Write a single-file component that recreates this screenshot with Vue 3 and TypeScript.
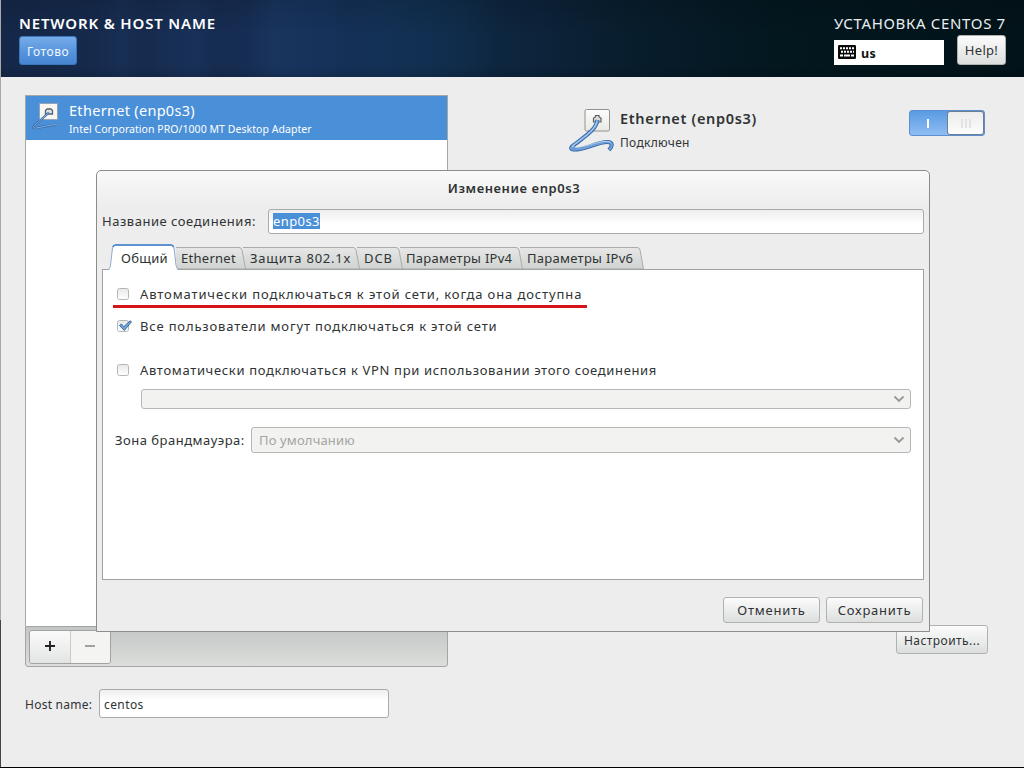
<script setup lang="ts">
import { ref } from 'vue'

interface Tab {
  id: string
  label: string
  width: number
}

const tabs: Tab[] = [
  { id: 'general', label: 'Общий', width: 66 },
  { id: 'ethernet', label: 'Ethernet', width: 67 },
  { id: 'security', label: 'Защита 802.1x', width: 114 },
  { id: 'dcb', label: 'DCB', width: 43 },
  { id: 'ipv4', label: 'Параметры IPv4', width: 120 },
  { id: 'ipv6', label: 'Параметры IPv6', width: 121 },
]
const activeTab = ref('general')

const connectionName = ref('enp0s3')
const hostName = ref('centos')
const device = 'Ethernet (enp0s3)'
const autoConnect = ref(false)
const allUsers = ref(true)
const autoVpn = ref(false)
</script>

<template>
  <div class="screen">
    <header class="top">
      <div class="top-left">
        <h1>NETWORK &amp; HOST NAME</h1>
        <button class="btn done"><span>Готово</span></button>
      </div>
      <div class="top-right">
        <div class="product"><span>УСТАНОВКА CENTOS 7</span></div>
        <div class="top-row">
          <div class="layout-box">
            <svg class="kbd" viewBox="0 0 18 14">
              <rect width="18" height="14" rx="1.2" fill="#0a0a0a" />
              <path
                d="M2 3.300h2m1 0h2m1 0h2m1 0h2m1 0h2M3 6.800h2m1 0h2m1 0h2m1 0h2m1 0h1M2 10.500h3m1 0h6m1 0h3"
                stroke="#fff"
                stroke-width="2"
                fill="none"
              />
            </svg>
            <b>us</b>
          </div>
          <button class="btn help"><span>Help!</span></button>
        </div>
      </div>
    </header>

    <main class="body">
      <div class="columns">
        <section class="devices">
          <div class="list">
            <div class="device">
              <svg class="dev-icon" viewBox="0 0 30 30">
                <rect x="8.500" y="2.500" width="18" height="16" fill="#f8f6ef" stroke="#8fa3ba" />
                <path d="M14.500 13V9.500l1.500-1.500h4l1.500 1.500V13z" fill="#dfe3e6" stroke="#4f6378" stroke-width="1.300" />
                <path d="M18 11.500L3.500 24.500c-2 2-1 3 2 2.500 7-1 14-4 22.500-3" fill="none" stroke="#2f64a0" stroke-width="2.200" />
                <path d="M18 11.500L3.500 24.500c-2 2-1 3 2 2.500 7-1 14-4 22.500-3" fill="none" stroke="#8cb8e6" stroke-width="1" />
              </svg>
              <div>
                <div class="dev-name"><span>{{ device }}</span></div>
                <div class="dev-desc"><span>Intel Corporation PRO/1000 MT Desktop Adapter</span></div>
              </div>
            </div>
          </div>
          <div class="list-tools">
            <div class="tool-group">
              <button class="tool">
                <svg viewBox="0 0 12 12"><path d="M6 1v10M1 6h10" stroke="#222" stroke-width="1.900" /></svg>
              </button>
              <button class="tool off">
                <svg viewBox="0 0 12 12"><path d="M1 6h10" stroke="#9fa19f" stroke-width="1.800" /></svg>
              </button>
            </div>
          </div>
        </section>

        <section class="details">
          <div class="status">
            <svg class="net-icon" viewBox="0 0 48 46">
              <defs>
                <linearGradient id="plate" x2="0" y2="1">
                  <stop offset="0" stop-color="#fdfdfc" />
                  <stop offset="1" stop-color="#e8e8e4" />
                </linearGradient>
              </defs>
              <rect x="17" y="1.500" width="24.500" height="21.500" rx="1.500" fill="url(#plate)" stroke="#92938e" />
              <path d="M25.500 14v-4l2-1V7.500h3.500V9l2 1v4z" fill="#dcdcd8" stroke="#5c6068" stroke-width="1.200" />
              <path
                d="M29.500 12C28 23 14 30 4 38.500c-3 3 2 3.500 8 2.500 9-1.500 19-7 27-7 7 0 5 4.500 2 8"
                fill="none"
                stroke="#2e5f9f"
                stroke-width="4"
              />
              <path
                d="M29.500 12C28 23 14 30 4 38.500c-3 3 2 3.500 8 2.500 9-1.500 19-7 27-7 7 0 5 4.500 2 8"
                fill="none"
                stroke="#6f9fd8"
                stroke-width="2.400"
              />
              <path
                d="M29 13C27 23.500 13 30.500 4 38.500c5 2 10 .5 16-1.200 8-2.300 18-5.800 22.500-2.800"
                fill="none"
                stroke="#c3dbf3"
                stroke-width=".9"
              />
            </svg>
            <div class="status-text">
              <div class="status-name"><span>{{ device }}</span></div>
              <div class="status-state"><span>Подключен</span></div>
            </div>
            <div class="switch">
              <div class="on"><i></i></div>
              <div class="knob"><i></i><i></i><i></i></div>
            </div>
          </div>
          <button class="btn configure"><span>Настроить...</span></button>
        </section>
      </div>

      <div class="host">
        <label for="host"><span>Host name:</span></label>
        <input id="host" v-model="hostName" spellcheck="false" />
      </div>
    </main>

    <div class="dialog">
      <div class="title"><span>Изменение enp0s3</span></div>
      <div class="name-row">
        <label class="name-label"><span>Название соединения:</span></label>
        <div class="entry"><span class="sel">{{ connectionName }}</span></div>
      </div>

      <div class="tabs">
        <div
          v-for="(tab, i) in tabs"
          :key="tab.id"
          :class="['tab', tab.id, { active: tab.id === activeTab }]"
          :style="{ width: tab.width + 'px', zIndex: tabs.length - i }"
          @click="activeTab = tab.id"
        >
          <svg v-if="tab.id === activeTab" class="shape" :width="tab.width + 4" height="26">
            <path :d="`M-1 26L2.500 3Q3 1 5 1H${tab.width - 5}Q${tab.width - 2.500} 1 ${tab.width - 2} 3L${tab.width + 1.500} 26z`" fill="#fff" />
            <path :d="`M-1 25.500Q0 24 .5 21L2.500 4Q3 1 5.500 1H${tab.width - 5}Q${tab.width - 2.500} 1 ${tab.width - 2} 4L${tab.width} 21Q${tab.width + .5} 24 ${tab.width + 2} 25.500`" fill="none" stroke="#8fa9c8" />
            <path :d="`M3 3Q3.500 1 5.500 1H${tab.width - 5}Q${tab.width - 3} 1 ${tab.width - 2.500} 3`" fill="none" stroke="#3f7fcb" stroke-width="1.600" />
          </svg>
          <svg v-else class="shape" :width="tab.width + 4" height="22">
            <defs>
              <linearGradient :id="'g-' + tab.id" x2="0" y2="1">
                <stop offset="0" stop-color="#e6e7e6" />
                <stop offset="1" stop-color="#d0d3d1" />
              </linearGradient>
            </defs>
            <path :d="`M-6 .5H${tab.width - 4}Q${tab.width - 1.500} .5 ${tab.width - 1} 3L${tab.width + 2.500} 22H-6z`" :fill="`url(#g-${tab.id})`" stroke="#a9aca9" />
          </svg>
          <span>{{ tab.label }}</span>
        </div>
      </div>

      <div class="page">
        <div class="check auto-line">
          <i :class="['box', { on: autoConnect }]"></i>
          <span class="t-auto">Автоматически подключаться к этой сети, когда она доступна</span>
        </div>
        <div class="underline"></div>
        <div class="check users-line">
          <i :class="['box', { on: allUsers }]">
            <svg v-if="allUsers" viewBox="0 0 16 14">
              <path d="M2.500 6.500L4.500 5l2.300 2.800L13 1.800l1.500 1L7.300 11.500z" fill="#74a6de" stroke="#2f5f98" stroke-width=".9" />
            </svg>
          </i>
          <span class="t-users">Все пользователи могут подключаться к этой сети</span>
        </div>
        <div class="check vpn-line">
          <i :class="['box', { on: autoVpn }]"></i>
          <span class="t-vpn">Автоматически подключаться к VPN при использовании этого соединения</span>
        </div>
        <div class="combo vpn-combo">
          <svg viewBox="0 0 12 8"><path d="M1.500 1.500L6 6l4.500-4.500" fill="none" stroke="#979a97" stroke-width="1.900" /></svg>
        </div>
        <div class="zone">
          <label><span>Зона брандмауэра:</span></label>
          <div class="combo zone-combo">
            <span>По умолчанию</span>
            <svg viewBox="0 0 12 8"><path d="M1.500 1.500L6 6l4.500-4.500" fill="none" stroke="#979a97" stroke-width="1.900" /></svg>
          </div>
        </div>
      </div>

      <div class="actions">
        <button class="btn cancel"><span>Отменить</span></button>
        <button class="btn save"><span>Сохранить</span></button>
      </div>
    </div>
  </div>
</template>

<style>
body {
  margin: 0;
  overflow: hidden;
}
</style>

<style scoped>
* {
  box-sizing: border-box;
}
.screen {
  position: relative;
  width: 1024px;
  height: 768px;
  overflow: hidden;
  background: #ededed;
  border-bottom: 1px solid #000;
  color: #2f3334;
  font: 13px/18px 'Noto Sans', 'Open Sans', sans-serif;
  white-space: nowrap;
}
.screen::before {
  content: '';
  position: absolute;
  left: 0;
  top: 0;
  width: 1px;
  height: 768px;
  z-index: 3;
  background: linear-gradient(#a9a9a9 620px, #444 620px);
}
button,
input {
  font: inherit;
  color: inherit;
  margin: 0;
}
.btn {
  display: flex;
  align-items: center;
  justify-content: center;
  padding: 0;
  border: 1px solid #b0b2b0;
  border-radius: 3px;
  background: linear-gradient(#fbfbfb, #e9eaea 60%, #dcdedd);
}

/* header */
.top {
  display: flex;
  justify-content: space-between;
  height: 77px;
  padding: 14px 18px 0 19px;
  background:
    linear-gradient(rgba(0, 0, 0, 0.12), transparent 45%, transparent 85%, rgba(0, 0, 0, 0.12)),
    linear-gradient(90deg, transparent 9%, rgba(60, 110, 180, 0.06) 12%, transparent 14%, rgba(60, 110, 180, 0.08) 19%, transparent 21%, transparent 24%, rgba(60, 110, 180, 0.08) 27%, transparent 31%, rgba(0, 0, 0, 0.05) 34%, transparent 37%, transparent 45%, rgba(0, 0, 0, 0.06) 49%, transparent 53%),
    linear-gradient(90deg, #152849 0, #162c51 22%, #16335c 32%, #112f50 42%, #0c2238 54%, #081d2c 62%, #03171f 76%, #021319 100%);
  color: #fff;
}
h1 {
  margin: 0 0 4px;
  font-size: 15px;
  line-height: 18px;
  font-weight: 600;
  letter-spacing: 0.83px;
}
.done {
  width: 58px;
  height: 29px;
  padding-top: 2px;
  border-color: #3a76bd;
  background: linear-gradient(#76ace9, #5592dc 60%, #4585d2);
  color: #f2f8ff;
  font-size: 12px;
  letter-spacing: 0.5px;
}
.top-right {
  width: 172px;
}
.product {
  height: 18px;
  font-size: 15px;
  letter-spacing: 0.66px;
  color: #e8eef0;
}
.top-row {
  display: flex;
  justify-content: space-between;
  padding-top: 3px;
}
.layout-box {
  display: flex;
  align-items: center;
  width: 110px;
  height: 25px;
  margin-top: 5px;
  padding-left: 4px;
  background: #fff;
  color: #111;
}
.layout-box b {
  padding: 2px 0 0 5px;
  font-size: 12.5px;
  letter-spacing: 0.4px;
}
.kbd {
  width: 18px;
  height: 14px;
  margin-top: -2px;
}
.help {
  width: 49px;
  height: 30px;
  color: #2f3334;
  letter-spacing: 0.3px;
}

/* body */
.body {
  padding: 18px 36px 0 25px;
}
.columns {
  display: flex;
  justify-content: space-between;
}
.devices {
  width: 423px;
  height: 572px;
  display: flex;
  flex-direction: column;
}
.list {
  flex: 1;
  border: 1px solid #a5a7a5;
  border-bottom: 0;
  background: #fff;
}
.device {
  display: flex;
  gap: 8px;
  height: 44px;
  padding: 5px 0 0 5px;
  background: #4a90d9;
  color: #fff;
}
.dev-icon {
  width: 30px;
  height: 30px;
}
.dev-name {
  font-size: 14.5px;
  line-height: 19px;
  letter-spacing: 0.3px;
}
.dev-desc {
  padding-top: 1px;
  font-size: 10.5px;
  line-height: 17px;
  letter-spacing: 0.05px;
}
.list-tools {
  height: 41px;
  padding: 3px;
  border: 1px solid #a3a6a3;
  border-radius: 0 0 3px 3px;
  background: linear-gradient(#c3c6c4, #dbdedb);
}
.tool-group {
  display: flex;
  width: 82px;
  height: 34px;
  border: 1px solid #a0a3a0;
  border-radius: 3px;
  overflow: hidden;
}
.tool {
  flex: 1;
  display: flex;
  align-items: center;
  justify-content: center;
  padding: 0 0 2px;
  border: 0;
  background: linear-gradient(#fafafa, #e3e5e4);
}
.tool.off {
  border-left: 1px solid #c9cbc9;
  background: #f4f4f2;
}
.tool svg {
  width: 12px;
  height: 12px;
}
.details {
  display: flex;
  flex-direction: column;
  justify-content: space-between;
  align-items: flex-end;
  width: 420px;
  height: 559px;
  padding-top: 13px;
}
.status {
  display: flex;
  width: 420px;
  padding-right: 3px;
}
.net-icon {
  width: 48px;
  height: 46px;
}
.status-text {
  flex: 1;
  padding-left: 4px;
}
.status-name {
  font-size: 14.5px;
  line-height: 20px;
  font-weight: 600;
  letter-spacing: 0.68px;
}
.status-state {
  margin-top: 6px;
  font-size: 12px;
  letter-spacing: 0.3px;
}
.switch {
  display: flex;
  width: 76px;
  height: 26px;
  margin-top: 2px;
  border: 1px solid #5b8fd0;
  border-radius: 3px;
  background: linear-gradient(#5a9ae3, #8fbdf2);
}
.switch .on {
  flex: 1;
  display: flex;
  align-items: center;
  justify-content: center;
  padding: 1px 2px 0 0;
}
.switch .on i {
  width: 2px;
  height: 9px;
  background: #fff;
}
.knob {
  display: flex;
  align-items: center;
  justify-content: center;
  gap: 2px;
  width: 37px;
  border: 1px solid #6e7f94;
  border-radius: 3px;
  background: linear-gradient(#ececec, #fdfdfd);
}
.knob i {
  width: 2px;
  height: 9px;
  background: #e2e2e0;
}
.configure {
  width: 92px;
  height: 29px;
  padding-top: 3px;
  font-size: 12px;
  letter-spacing: 0.45px;
}
.host {
  display: flex;
  align-items: center;
  margin-top: 22px;
  font-size: 12px;
}
.host label {
  width: 74px;
  padding-top: 3px;
  letter-spacing: 0.25px;
}
.host input {
  width: 290px;
  height: 29px;
  padding: 2px 4px 0;
  border: 1px solid #a9aba9;
  border-radius: 3px;
  background: linear-gradient(#efefef, #fff 40%);
  outline: 0;
  letter-spacing: 0.4px;
}

/* dialog */
.dialog {
  position: absolute;
  left: 96px;
  top: 170px;
  width: 834px;
  height: 462px;
  padding: 0 5px;
  border: 1px solid #8b8d8b;
  border-radius: 5px 5px 0 0;
  background: linear-gradient(#f9f9f9, #ededed 36px);
  z-index: 2;
}
.title {
  height: 38px;
  padding-left: 2px;
  line-height: 34px;
  text-align: center;
  font-weight: 600;
  letter-spacing: 0.57px;
}
.name-row {
  display: flex;
  align-items: center;
  height: 25px;
}
.name-label {
  width: 166px;
  padding-bottom: 2px;
  letter-spacing: 0.52px;
}
.entry {
  display: flex;
  align-items: center;
  flex: 1;
  height: 25px;
  padding: 0 0 0 4px;
  border: 1px solid #a9aba9;
  border-radius: 3px;
  background: linear-gradient(#ededed, #fff 60%);
}
.sel {
  height: 16px;
  line-height: 16px;
  margin-bottom: 1px;
  background: #4a90d9;
  color: #fff;
  letter-spacing: 0.4px;
}
.tabs {
  display: flex;
  align-items: flex-end;
  height: 35px;
  padding-left: 8px;
}
.tab {
  position: relative;
  height: 22px;
  padding-left: 5px;
  line-height: 22px;
  letter-spacing: 0.28px;
}
.tab.active {
  height: 26px;
  padding-left: 11px;
  line-height: 28px;
  margin-bottom: -1px;
}
.tab.security {
  padding-left: 7px;
  letter-spacing: 0.76px;
}
.tab.dcb {
  padding-left: 7px;
  letter-spacing: 0.9px;
}
.tab.ipv4 {
  padding-left: 6px;
}
.tab.ipv6 {
  padding-left: 7px;
}
.tab span {
  position: relative;
}
.shape {
  position: absolute;
  left: 0;
  bottom: 0;
  overflow: visible;
}
.tab:not(.active) .shape {
  overflow: hidden;
}
.page {
  height: 311px;
  padding: 14px 12px 0;
  border: 1px solid #a0a2a0;
  background: #fff;
}
.check {
  display: flex;
  align-items: center;
  height: 20px;
  padding-left: 2px;
}
.check > span {
  margin-left: 11px;
}
.t-auto {
  letter-spacing: 0.88px;
}
.t-users {
  letter-spacing: 0.84px;
}
.t-vpn {
  letter-spacing: 0.66px;
}
.box {
  position: relative;
  width: 12px;
  height: 12px;
  border: 1px solid #b4b6b4;
  border-radius: 2.5px;
  background: linear-gradient(#e9e9e9, #fff);
}
.box svg {
  position: absolute;
  left: -1px;
  top: -2px;
  width: 16px;
  height: 14px;
}
.underline {
  width: 474px;
  height: 3px;
  margin: 1px 0 0 -2px;
  background: #d5151b;
}
.users-line {
  margin-top: 8px;
}
.vpn-line {
  margin-top: 24px;
}
.combo {
  display: flex;
  align-items: center;
  justify-content: flex-end;
  border: 1px solid #b5b8b5;
  border-radius: 3px;
  background: #f2f2f0;
  color: #a3a6a3;
}
.combo svg {
  width: 12px;
  height: 8px;
  margin-right: 5px;
}
.vpn-combo {
  height: 20px;
  margin: 9px 0 0 26px;
}
.zone {
  display: flex;
  align-items: center;
  margin-top: 18px;
}
.zone label {
  width: 136px;
  letter-spacing: 0.5px;
}
.zone-combo {
  flex: 1;
  justify-content: space-between;
  height: 26px;
  padding-left: 7px;
  letter-spacing: 0.15px;
}
.actions {
  display: flex;
  justify-content: flex-end;
  gap: 6px;
  padding: 17px 1px 0 0;
}
.actions .btn {
  width: 97px;
  height: 26px;
  padding-bottom: 1px;
  letter-spacing: 0.75px;
}
</style>
